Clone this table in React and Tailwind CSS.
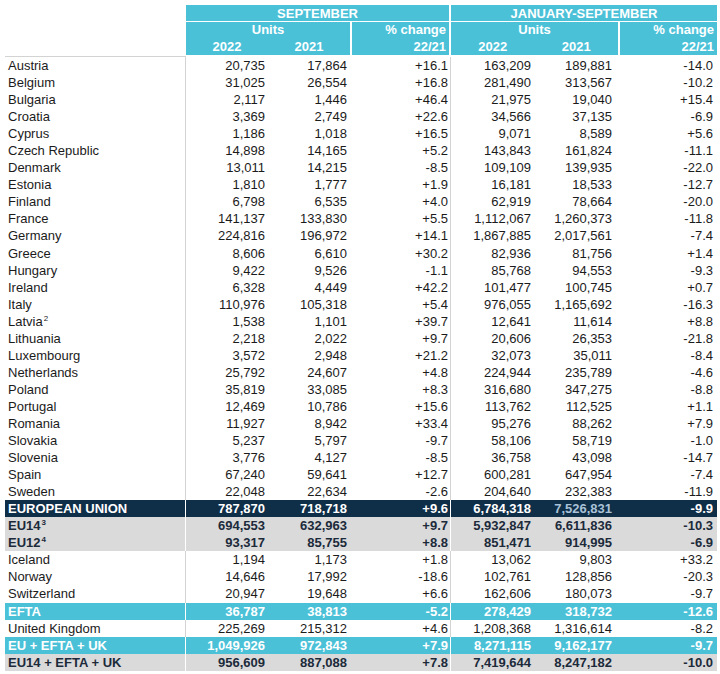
import React from 'react';

const rows = [
  ['Austria', '20,735', '17,864', '+16.1', '163,209', '189,881', '-14.0'],
  ['Belgium', '31,025', '26,554', '+16.8', '281,490', '313,567', '-10.2'],
  ['Bulgaria', '2,117', '1,446', '+46.4', '21,975', '19,040', '+15.4'],
  ['Croatia', '3,369', '2,749', '+22.6', '34,566', '37,135', '-6.9'],
  ['Cyprus', '1,186', '1,018', '+16.5', '9,071', '8,589', '+5.6'],
  ['Czech Republic', '14,898', '14,165', '+5.2', '143,843', '161,824', '-11.1'],
  ['Denmark', '13,011', '14,215', '-8.5', '109,109', '139,935', '-22.0'],
  ['Estonia', '1,810', '1,777', '+1.9', '16,181', '18,533', '-12.7'],
  ['Finland', '6,798', '6,535', '+4.0', '62,919', '78,664', '-20.0'],
  ['France', '141,137', '133,830', '+5.5', '1,112,067', '1,260,373', '-11.8'],
  ['Germany', '224,816', '196,972', '+14.1', '1,867,885', '2,017,561', '-7.4'],
  ['Greece', '8,606', '6,610', '+30.2', '82,936', '81,756', '+1.4'],
  ['Hungary', '9,422', '9,526', '-1.1', '85,768', '94,553', '-9.3'],
  ['Ireland', '6,328', '4,449', '+42.2', '101,477', '100,745', '+0.7'],
  ['Italy', '110,976', '105,318', '+5.4', '976,055', '1,165,692', '-16.3'],
  ['Latvia', '1,538', '1,101', '+39.7', '12,641', '11,614', '+8.8', '2'],
  ['Lithuania', '2,218', '2,022', '+9.7', '20,606', '26,353', '-21.8'],
  ['Luxembourg', '3,572', '2,948', '+21.2', '32,073', '35,011', '-8.4'],
  ['Netherlands', '25,792', '24,607', '+4.8', '224,944', '235,789', '-4.6'],
  ['Poland', '35,819', '33,085', '+8.3', '316,680', '347,275', '-8.8'],
  ['Portugal', '12,469', '10,786', '+15.6', '113,762', '112,525', '+1.1'],
  ['Romania', '11,927', '8,942', '+33.4', '95,276', '88,262', '+7.9'],
  ['Slovakia', '5,237', '5,797', '-9.7', '58,106', '58,719', '-1.0'],
  ['Slovenia', '3,776', '4,127', '-8.5', '36,758', '43,098', '-14.7'],
  ['Spain', '67,240', '59,641', '+12.7', '600,281', '647,954', '-7.4'],
  ['Sweden', '22,048', '22,634', '-2.6', '204,640', '232,383', '-11.9'],
  ['EUROPEAN UNION', '787,870', '718,718', '+9.6', '6,784,318', '7,526,831', '-9.9', null, 'dark'],
  ['EU14', '694,553', '632,963', '+9.7', '5,932,847', '6,611,836', '-10.3', '3', 'gray'],
  ['EU12', '93,317', '85,755', '+8.8', '851,471', '914,995', '-6.9', '4', 'gray'],
  ['Iceland', '1,194', '1,173', '+1.8', '13,062', '9,803', '+33.2'],
  ['Norway', '14,646', '17,992', '-18.6', '102,761', '128,856', '-20.3'],
  ['Switzerland', '20,947', '19,648', '+6.6', '162,606', '180,073', '-9.7'],
  ['EFTA', '36,787', '38,813', '-5.2', '278,429', '318,732', '-12.6', null, 'cyan'],
  ['United Kingdom', '225,269', '215,312', '+4.6', '1,208,368', '1,316,614', '-8.2'],
  ['EU + EFTA + UK', '1,049,926', '972,843', '+7.9', '8,271,115', '9,162,177', '-9.7', null, 'cyan'],
  ['EU14 + EFTA + UK', '956,609', '887,088', '+7.8', '7,419,644', '8,247,182', '-10.0', null, 'gray'],
];

const grid = 'grid grid-cols-[181px_85px_82px_98px_84px_82px_100px]';

const rowStyles = {
  plain: { bg: 'bg-white text-[#1b1b1b]', line: 'border-[#d3d3d3]' },
  dark: { bg: 'bg-[#0f2e47] text-white font-bold', line: 'border-white' },
  gray: { bg: 'bg-[#dadada] text-[#1c2a3a] font-bold', line: 'border-white' },
  cyan: { bg: 'bg-[#4bc1d8] text-white font-bold', line: 'border-white' },
};

function DataRow({ r }) {
  const [name, s22, s21, sch, j22, j21, jch, sup, kind = 'plain'] = r;
  const st = rowStyles[kind];
  return (
    <div className={`${grid} h-[17.06px] leading-[17px] ${st.bg}`}>
      <div className={`pl-[3px] border-r ${st.line} whitespace-nowrap`}>
        {name}
        {sup && <span className="inline-block align-top text-[8px] leading-[10px] ml-[1px] mt-[1px]">{sup}</span>}
      </div>
      <div className="text-right pr-[6px]">{s22}</div>
      <div className="text-right pr-[6px]">{s21}</div>
      <div className={`text-right pr-[2px] border-r ${st.line}`}>{sch}</div>
      <div className="text-right pr-[4px]">{j22}</div>
      <div className={`text-right pr-[5px] ${kind === 'dark' ? 'text-[#a9c2d8]' : ''}`}>{j21}</div>
      <div className="text-right pr-[4px]">{jch}</div>
    </div>
  );
}

function HeaderBlock({ title }) {
  return (
    <div className="flex flex-col bg-[#4bc1d8] text-white font-bold">
      <div className="h-[17px] leading-[17px] text-center border-b border-white">{title}</div>
      <div className="flex flex-1">
        <div className="flex flex-col flex-1 border-r-2 border-white">
          <div className="h-[16px] leading-[16px] text-center">Units</div>
          <div className="flex h-[17px] leading-[17px]">
            <div className="flex-1 text-center">2022</div>
            <div className="flex-1 text-center">2021</div>
          </div>
        </div>
        <div className="flex flex-col w-[97px] text-right pr-[3px]">
          <div className="h-[16px] leading-[16px]">% change</div>
          <div className="h-[17px] leading-[17px]">22/21</div>
        </div>
      </div>
    </div>
  );
}

export default function App() {
  return (
    <div className="bg-white w-[720px] h-[674px] pt-[5px] pl-[5px] text-[13px] font-['Liberation_Sans',Arial,sans-serif]">
      <div className="w-[712px]">
        <div className="flex h-[52px]">
          <div className="w-[181px] border-b border-[#d3d3d3]" />
          <div className="w-[265px] border-r-2 border-white">
            <HeaderBlock title="SEPTEMBER" />
          </div>
          <div className="w-[266px]">
            <HeaderBlock title="JANUARY-SEPTEMBER" />
          </div>
        </div>
        <div>
          {rows.map((r) => (
            <DataRow key={r[0]} r={r} />
          ))}
        </div>
      </div>
    </div>
  );
}
